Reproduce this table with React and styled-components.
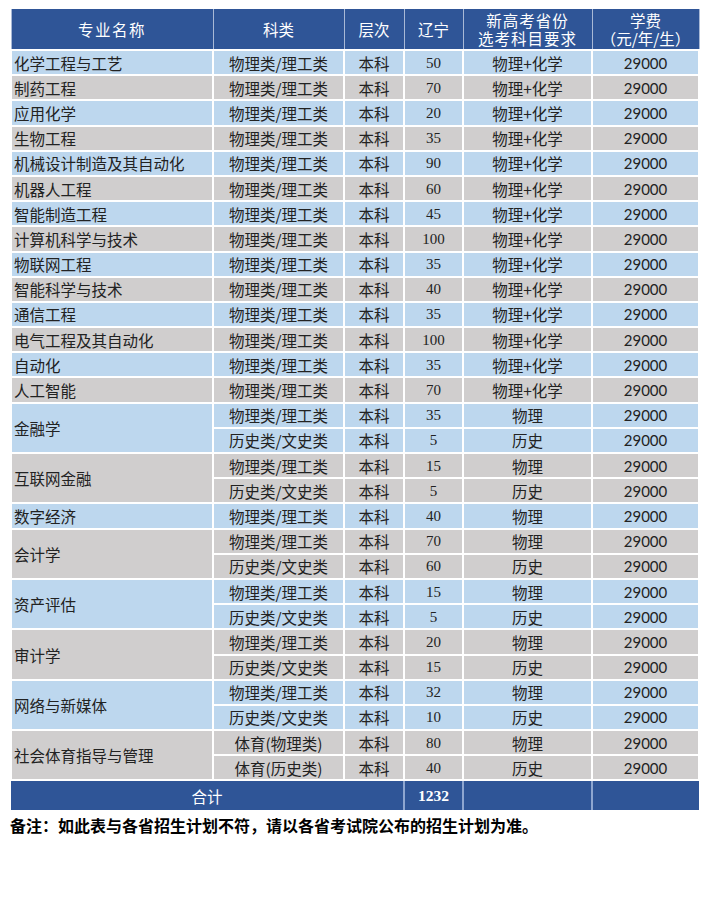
import React from "react";
import styled, { createGlobalStyle } from "styled-components";

const Global = createGlobalStyle`
  html, body { margin: 0; padding: 0; background: #fff; }
  body { font-family: "Noto Sans CJK SC", "Noto Sans", sans-serif; }
`;

const Page = styled.div`
  padding: 9px 17px 0 10px;
  width: 715px;
  box-sizing: border-box;
`;

const Table = styled.table`
  border-collapse: collapse;
  width: 688px;
  table-layout: fixed;
  color: #222;
`;

const HeadCell = styled.th`
  background: #2f5597;
  color: #fff;
  font-weight: normal;
  font-size: 15.5px;
  line-height: 18px;
  height: 40px;
  padding: 0;
  text-align: center;
  vertical-align: middle;
  border: 1px solid #a9b9d6;
  border-top: none;
  white-space: nowrap;
  letter-spacing: ${(p) => p.$spacing || "0"};
`;

const Row = styled.tr`
  height: 25.2px;
  background: ${(p) => (p.$alt ? "#d0cece" : "#bdd7ee")};
`;

const Cell = styled.td`
  padding: 0 ${(p) => (p.$left ? "2px" : "0")};
  text-align: ${(p) => (p.$left ? "left" : "center")};
  vertical-align: middle;
  border: 2px solid #fff;
  line-height: 18px;
  white-space: nowrap;
  font-family: ${(p) =>
    p.$num === "serif"
      ? '"Liberation Serif", serif'
      : p.$num === "sans"
      ? 'Lato, "Liberation Sans", sans-serif'
      : '"Noto Sans CJK SC", sans-serif'};
  font-size: ${(p) => (p.$num ? "15px" : "15.5px")};
`;

const TotalRow = styled.tr`
  height: 30px;
  background: #2f5597;
  color: #fff;
`;

const TotalCell = styled.td`
  border: 2px solid #fff;
  border-color: #fff #8ea6d0 #fff;
  border-bottom: none;
  text-align: center;
  vertical-align: middle;
  padding: 0;
  font-size: 15.5px;
  font-weight: ${(p) => (p.$bold ? "bold" : "normal")};
  font-family: ${(p) =>
    p.$serif ? '"Liberation Serif", serif' : '"Noto Sans CJK SC", sans-serif'};
  &:first-child { border-left: none; }
  &:last-child { border-right: none; }
`;

const Note = styled.p`
  margin: 4px 0 0 0;
  font-size: 16px;
  font-weight: bold;
  color: #000;
  line-height: 22px;
  white-space: nowrap;
`;

const single = [
  ["化学工程与工艺", 50],
  ["制药工程", 70],
  ["应用化学", 20],
  ["生物工程", 35],
  ["机械设计制造及其自动化", 90],
  ["机器人工程", 60],
  ["智能制造工程", 45],
  ["计算机科学与技术", 100],
  ["物联网工程", 35],
  ["智能科学与技术", 40],
  ["通信工程", 35],
  ["电气工程及其自动化", 100],
  ["自动化", 35],
  ["人工智能", 70],
];

const groups = [
  ["金融学", [["物理类/理工类", 35, "物理"], ["历史类/文史类", 5, "历史"]]],
  ["互联网金融", [["物理类/理工类", 15, "物理"], ["历史类/文史类", 5, "历史"]]],
  ["数字经济", [["物理类/理工类", 40, "物理"]]],
  ["会计学", [["物理类/理工类", 70, "物理"], ["历史类/文史类", 60, "历史"]]],
  ["资产评估", [["物理类/理工类", 15, "物理"], ["历史类/文史类", 5, "历史"]]],
  ["审计学", [["物理类/理工类", 20, "物理"], ["历史类/文史类", 15, "历史"]]],
  ["网络与新媒体", [["物理类/理工类", 32, "物理"], ["历史类/文史类", 10, "历史"]]],
  ["社会体育指导与管理", [["体育(物理类)", 80, "物理"], ["体育(历史类)", 40, "历史"]]],
];

export default function App() {
  const rows = [];
  single.forEach(([name, n], i) => {
    rows.push(
      <Row key={"s" + i} $alt={i % 2 === 1}>
        <Cell $left>{name}</Cell>
        <Cell>物理类/理工类</Cell>
        <Cell>本科</Cell>
        <Cell $num="serif">{n}</Cell>
        <Cell>物理+化学</Cell>
        <Cell $num="sans">29000</Cell>
      </Row>
    );
  });
  groups.forEach(([name, subs], gi) => {
    const alt = (single.length + gi) % 2 === 1;
    subs.forEach(([cat, n, subj], si) => {
      rows.push(
        <Row key={"g" + gi + "-" + si} $alt={alt}>
          {si === 0 && (
            <Cell $left rowSpan={subs.length}>
              {name}
            </Cell>
          )}
          <Cell>{cat}</Cell>
          <Cell>本科</Cell>
          <Cell $num="serif">{n}</Cell>
          <Cell>{subj}</Cell>
          <Cell $num="sans">29000</Cell>
        </Row>
      );
    });
  });

  return (
    <Page>
      <Global />
      <Table>
        <colgroup>
          <col style={{ width: 202 }} />
          <col style={{ width: 131 }} />
          <col style={{ width: 60 }} />
          <col style={{ width: 59 }} />
          <col style={{ width: 129 }} />
          <col style={{ width: 107 }} />
        </colgroup>
        <thead>
          <tr>
            <HeadCell $spacing="1.5px">专业名称</HeadCell>
            <HeadCell>科类</HeadCell>
            <HeadCell>层次</HeadCell>
            <HeadCell>辽宁</HeadCell>
            <HeadCell $spacing="1px">
              新高考省份
              <br />
              选考科目要求
            </HeadCell>
            <HeadCell>
              学费
              <br />
              （元/年/生）
            </HeadCell>
          </tr>
        </thead>
        <tbody>
          {rows}
          <TotalRow>
            <TotalCell colSpan={3}>合计</TotalCell>
            <TotalCell $bold $serif>1232</TotalCell>
            <TotalCell />
            <TotalCell />
          </TotalRow>
        </tbody>
      </Table>
      <Note>备注：如此表与各省招生计划不符，请以各省考试院公布的招生计划为准。</Note>
    </Page>
  );
}
